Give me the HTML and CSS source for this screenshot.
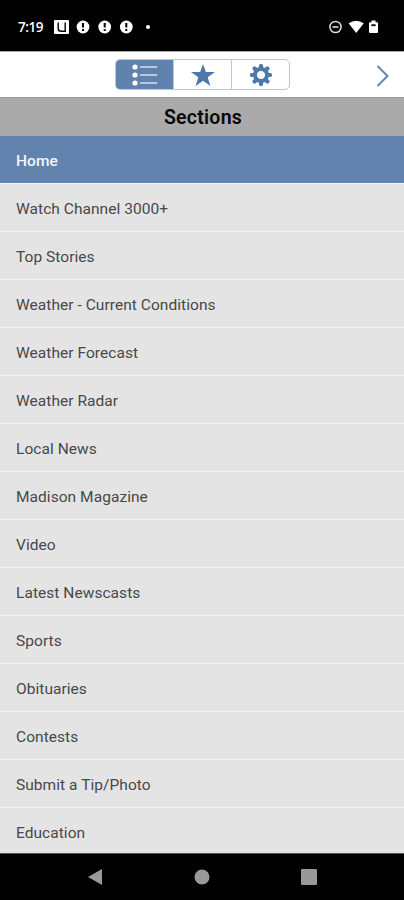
FILE: index.html
```html
<!DOCTYPE html>
<html lang="en">
<head>
<meta charset="utf-8">
<title>Sections</title>
<link rel="stylesheet" href="styles.css">
</head>
<body>
<div class="screen">
  <header class="status">
    <span class="time">7:19</span>
    <svg class="notices" width="100" height="16" viewBox="0 0 100 16">
      <rect x="0" y="1" width="15" height="14" rx="1" fill="#fff"/>
      <path d="M4.200 3.500v6q0 2.800 3 2.800h4V3.500" fill="none" stroke="#000" stroke-width="1.400"/>
      <g fill="#fff"><circle cx="29" cy="8" r="6.400"/><circle cx="50.700" cy="8" r="6.400"/><circle cx="72.300" cy="8" r="6.400"/><circle cx="94" cy="8" r="2"/></g>
      <path d="M29 4v4.500M50.700 4v4.500M72.300 4v4.500M29 10v2M50.700 10v2M72.300 10v2" stroke="#000" stroke-width="2"/>
    </svg>
    <svg class="system" width="50" height="16" viewBox="0 0 50 16">
      <circle cx="6.500" cy="8" r="5.600" fill="none" stroke="#ddd" stroke-width="1.500"/>
      <path d="M3.500 8h6" stroke="#ddd" stroke-width="1.600"/>
      <path d="M19.600 4.200Q27.200-.9 34.800 4.200L27.200 14Z" fill="#fff"/>
      <path d="M41 3.200h1.500V1.500h4v1.700H48q1 0 1 1V13q0 1-1 1h-7q-1 0-1-1V4.200q0-1 1-1Z" fill="#fff"/>
      <path d="M42.300 6.200h4.300" stroke="#000" stroke-width="1.800"/>
    </svg>
  </header>
  <nav class="toolbar">
    <div class="tabs">
      <span class="tab active">
        <svg width="26" height="22" viewBox="0 0 26 22">
          <g fill="#fff"><circle cx="3" cy="3" r="2.600"/><circle cx="3" cy="11" r="2.600"/><circle cx="3" cy="19" r="2.600"/></g>
          <path d="M8 3h17M8 11h17M8 19h17" stroke="#d5e0ee" stroke-width="1.500"/>
        </svg>
      </span>
      <span class="tab">
        <svg width="24" height="22" viewBox="0 0 24 22"><path d="M12 0l2.900 8.100H24l-7.300 5.100L19.400 22 12 16.700 4.600 22l2.700-8.800L0 8.100h9.100Z" fill="#4d78aa"/></svg>
      </span>
      <span class="tab">
        <svg width="22" height="22" viewBox="-11 -11 22 22">
          <g stroke="#4d78aa" stroke-width="4.200" stroke-linecap="round"><path d="M0-9V-6M0 9V6M-9 0H-6M9 0H6M-6.400-6.400l2 2M6.400 6.400l-2-2M-6.400 6.400l2-2M6.400-6.400l-2 2"/></g>
          <circle r="6" fill="none" stroke="#4d78aa" stroke-width="4"/>
        </svg>
      </span>
    </div>
    <svg class="next" width="14" height="24" viewBox="0 0 14 24"><path d="M1.500 2 11.500 12 1.500 22" fill="none" stroke="#6584ae" stroke-width="2"/></svg>
  </nav>
  <h1 class="title">Sections</h1>
  <ul class="list">
    <li class="selected">Home</li>
    <li>Watch Channel 3000+</li>
    <li>Top Stories</li>
    <li>Weather - Current Conditions</li>
    <li>Weather Forecast</li>
    <li>Weather Radar</li>
    <li>Local News</li>
    <li>Madison Magazine</li>
    <li>Video</li>
    <li>Latest Newscasts</li>
    <li>Sports</li>
    <li>Obituaries</li>
    <li>Contests</li>
    <li>Submit a Tip/Photo</li>
    <li>Education</li>
  </ul>
  <footer class="navigation">
    <svg width="16" height="18" viewBox="0 0 16 18"><path d="M15 1v16L1 9Z" fill="#999"/></svg>
    <svg width="16" height="18" viewBox="0 0 16 18"><circle cx="8" cy="9" r="7.500" fill="#999"/></svg>
    <svg width="16" height="18" viewBox="0 0 16 18"><rect y="1" width="16" height="16" rx="1" fill="#999"/></svg>
  </footer>
</div>
</body>
</html>
```
FILE: styles.css
```css
* { box-sizing: border-box; }
body { margin: 0; font-family: Roboto, sans-serif; background: #000; }
svg { display: block; flex: none; }
.screen { width: 404px; height: 900px; display: flex; flex-direction: column; overflow: hidden; }
.status { height: 51px; flex: none; display: flex; align-items: center; padding: 2px 25px 0 18px; background: #000; color: #fff; }
.time { width: 36px; font: 600 13.5px/16px "Open Sans", sans-serif; letter-spacing: -0.5px; }
.system { margin-left: auto; }
.toolbar { height: 46px; flex: none; display: grid; grid-template-columns: 115px 175px 1fr; align-items: center; background: #fff; border-top: 1px solid #aaa; }
.tabs { grid-column: 2; height: 31px; display: flex; border: 1px solid #bdc6dc; border-radius: 5px; overflow: hidden; }
.tab { flex: 1; display: flex; align-items: center; justify-content: center; border-left: 1px solid #bdc6dc; }
.tab.active { background: #5f82ae; border-left: 0; }
.next { justify-self: end; margin: 3px 14px 0 0; }
.title { height: 39px; flex: none; margin: 0; background: #aaa; border-top: 1px solid #999; color: #080808; text-align: center; font-size: 19.5px; line-height: 39px; font-weight: 600; letter-spacing: 0.25px; padding-left: 2px; }
.list { height: 717px; flex: none; overflow: hidden; margin: 0; padding: 0; list-style: none; background: #e4e4e4; }
.list li { height: 48px; padding: 1px 0 0 16px; line-height: 48px; font-size: 15.5px; letter-spacing: 0.05px; color: #484848; border-bottom: 1px solid #f4f4f4; }
.list .selected { background: #6183ad; color: #f4f7fc; font-weight: 500; }
.navigation { height: 47px; flex: none; display: flex; align-items: center; justify-content: space-between; padding: 0 87px; background: #000; border-top: 1px solid #555; }
```
